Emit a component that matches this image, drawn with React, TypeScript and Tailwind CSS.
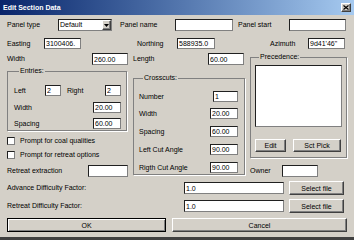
import React from 'react';

// classic win32 dialog, scaled down
const sunken = 'bg-white border border-[#202020] border-r-[#808080] border-b-[#808080]';
const raised = 'bg-[#d4d0c8] border border-t-white border-l-white border-r-[#404040] border-b-[#404040] shadow-[inset_-1px_-1px_0_#808080]';
const group = 'border border-[#808080] shadow-[1px_1px_0_#fff]';

function Field({ w, h = 'h-[12px]', value = '' }: { w: string; h?: string; value?: string }) {
  return (
    <input
      readOnly
      defaultValue={value}
      className={`${w} ${h} ${sunken} shrink-0 pl-[1px] text-[7px] leading-none outline-none`}
    />
  );
}

function Btn({ w, label, isDefault = false }: { w: string; label: string; isDefault?: boolean }) {
  const cls = isDefault
    ? 'bg-[#d4d0c8] border border-black shadow-[inset_1px_1px_0_#fff,inset_-1px_-1px_0_#808080]'
    : raised;
  return (
    <button className={`${w} h-[14px] ${cls} shrink-0 flex items-center justify-center text-[7px] leading-none`}>
      {label}
    </button>
  );
}

function Check({ label }: { label: string }) {
  return (
    <div className="flex items-center mt-[6px] h-[8px]">
      <div className={`w-[8px] h-[8px] ${sunken} shrink-0`} />
      <span className="ml-[5px]">{label}</span>
    </div>
  );
}

function Row({ label, value, w = 'w-[28px]', mt }: { label: string; value: string; w?: string; mt: string }) {
  return (
    <div className={`flex items-center h-[11px] ${mt}`}>
      <span className="flex-1">{label}</span>
      <Field w={w} h="h-[11px]" value={value} />
    </div>
  );
}

export default function App() {
  return (
    <div className="w-[354px] h-[240px] bg-[#d4d0c8] text-black text-[7px] leading-[8px] font-['Liberation_Sans',Arial,sans-serif] flex flex-col border-b-[3px] border-b-[#404040] overflow-hidden">
      <div className="h-[15px] shrink-0 flex items-center justify-between pl-[3px] pr-[3px] bg-linear-to-r from-[#0a246a] to-[#a6caf0]">
        <span className="text-white font-bold text-[7px]">Edit Section Data</span>
        <div className={`w-[10px] h-[9px] ${raised} flex items-center justify-center`}>
          <svg width="6" height="5" viewBox="0 0 6 5">
            <path d="M0.5 0.5 L5.5 4.5 M5.5 0.5 L0.5 4.5" stroke="#000" strokeWidth="1.2" />
          </svg>
        </div>
      </div>

      <div className="flex items-center mt-[4px] pl-[7px] h-[12px]">
        <span className="w-[51px]">Panel type</span>
        <div className={`w-[54px] h-[12px] ${sunken} shrink-0 flex items-center`}>
          <span className="flex-1 pl-[1px]">Default</span>
          <div className={`w-[9px] h-[10px] ${raised} flex items-center justify-center`}>
            <svg width="5" height="3" viewBox="0 0 5 3">
              <path d="M0 0 H5 L2.5 3 Z" fill="#000" />
            </svg>
          </div>
        </div>
        <span className="ml-[8px] w-[55px]">Panel name</span>
        <Field w="w-[58px]" />
        <span className="ml-[5px] w-[51px]">Panel start</span>
        <Field w="w-[57px]" />
      </div>

      <div className="flex items-center mt-[7px] pl-[7px] h-[11px]">
        <span className="w-[37px]">Easting</span>
        <Field w="w-[37px]" h="h-[11px]" value="3100406." />
        <span className="ml-[56px] w-[40px]">Northing</span>
        <Field w="w-[38px]" h="h-[11px]" value="588935.0" />
        <span className="ml-[55px] w-[38px]">Azimuth</span>
        <Field w="w-[37px]" h="h-[11px]" value={'9d41\'46"'} />
      </div>

      <div className="flex items-start mt-[4px] pl-[7px]">
        {/* left column */}
        <div className="w-[121px] flex flex-col shrink-0">
          <div className="flex items-center h-[12px]">
            <span className="flex-1">Width</span>
            <Field w="w-[36px]" value="260.00" />
          </div>
          <fieldset className={`mt-[2px] w-[120px] ${group} pl-[6px] pr-[5px] pb-[1px]`}>
            <legend className="ml-[5px] px-[1px]">Entries:</legend>
            <div className="flex items-center h-[11px] mt-[10px]">
              <span className="w-[31px]">Left</span>
              <Field w="w-[16px]" h="h-[11px]" value="2" />
              <span className="ml-[6px] w-[38px]">Right</span>
              <Field w="w-[16px]" h="h-[11px]" value="2" />
            </div>
            <Row label="Width" value="20.00" mt="mt-[6px]" />
            <Row label="Spacing" value="60.00" mt="mt-[5px]" />
          </fieldset>
          <Check label="Prompt for coal qualities" />
          <Check label="Prompt for retreat options" />
          <div className="flex items-center h-[12px] mt-[6px]">
            <span className="flex-1">Retreat extraction</span>
            <Field w="w-[40px]" />
          </div>
        </div>

        {/* middle column */}
        <div className="ml-[5px] w-[112px] flex flex-col shrink-0">
          <div className="flex items-center h-[12px] pr-[1px]">
            <span className="flex-1">Length</span>
            <Field w="w-[36px]" value="60.00" />
          </div>
          <fieldset className={`mt-[9px] w-[112px] ${group} pl-[5px] pr-[6px] pb-[1px]`}>
            <legend className="ml-[4px] px-[1px]">Crosscuts:</legend>
            <Row label="Number" value="1" w="w-[25px]" mt="mt-[9px]" />
            <Row label="Width" value="20.00" mt="mt-[6px]" />
            <Row label="Spacing" value="60.00" mt="mt-[7px]" />
            <Row label="Left Cut Angle" value="90.00" mt="mt-[7px]" />
            <Row label="Rigth Cut Angle" value="90.00" mt="mt-[7px]" />
          </fieldset>
        </div>

        {/* right column */}
        <div className="ml-[5px] w-[97px] flex flex-col shrink-0">
          <fieldset className={`w-[97px] ${group} pl-[4px] pb-[5px]`}>
            <legend className="ml-[4px] px-[1px]">Precedence:</legend>
            <div className={`mt-[4px] w-[87px] h-[62px] ${sunken}`} />
            <div className="flex mt-[12px] h-[13px]">
              <Btn w="w-[31px] !h-[13px]" label="Edit" />
              <div className="w-[7px]" />
              <Btn w="w-[48px] !h-[13px]" label="Sct Pick" />
            </div>
          </fieldset>
          <div className="flex items-center h-[12px] mt-[7px]">
            <span className="w-[32px]">Owner</span>
            <Field w="w-[36px]" />
          </div>
        </div>
      </div>

      <div className="flex items-center mt-[4px] pl-[7px] h-[14px]">
        <span className="w-[177px]">Advance Difficulty Factor:</span>
        <Field w="w-[100px]" value="1.0" />
        <div className="w-[5px]" />
        <Btn w="w-[55px]" label="Select file" />
      </div>
      <div className="flex items-center mt-[4px] pl-[7px] h-[14px]">
        <span className="w-[177px]">Retreat Difficulty Factor:</span>
        <Field w="w-[100px]" value="1.0" />
        <div className="w-[5px]" />
        <Btn w="w-[55px]" label="Select file" />
      </div>

      <div className="flex items-center mt-[5px] pl-[7px] h-[14px]">
        <Btn w="w-[159px]" label="OK" isDefault />
        <div className="w-[6px]" />
        <Btn w="w-[175px]" label="Cancel" />
      </div>
    </div>
  );
}
